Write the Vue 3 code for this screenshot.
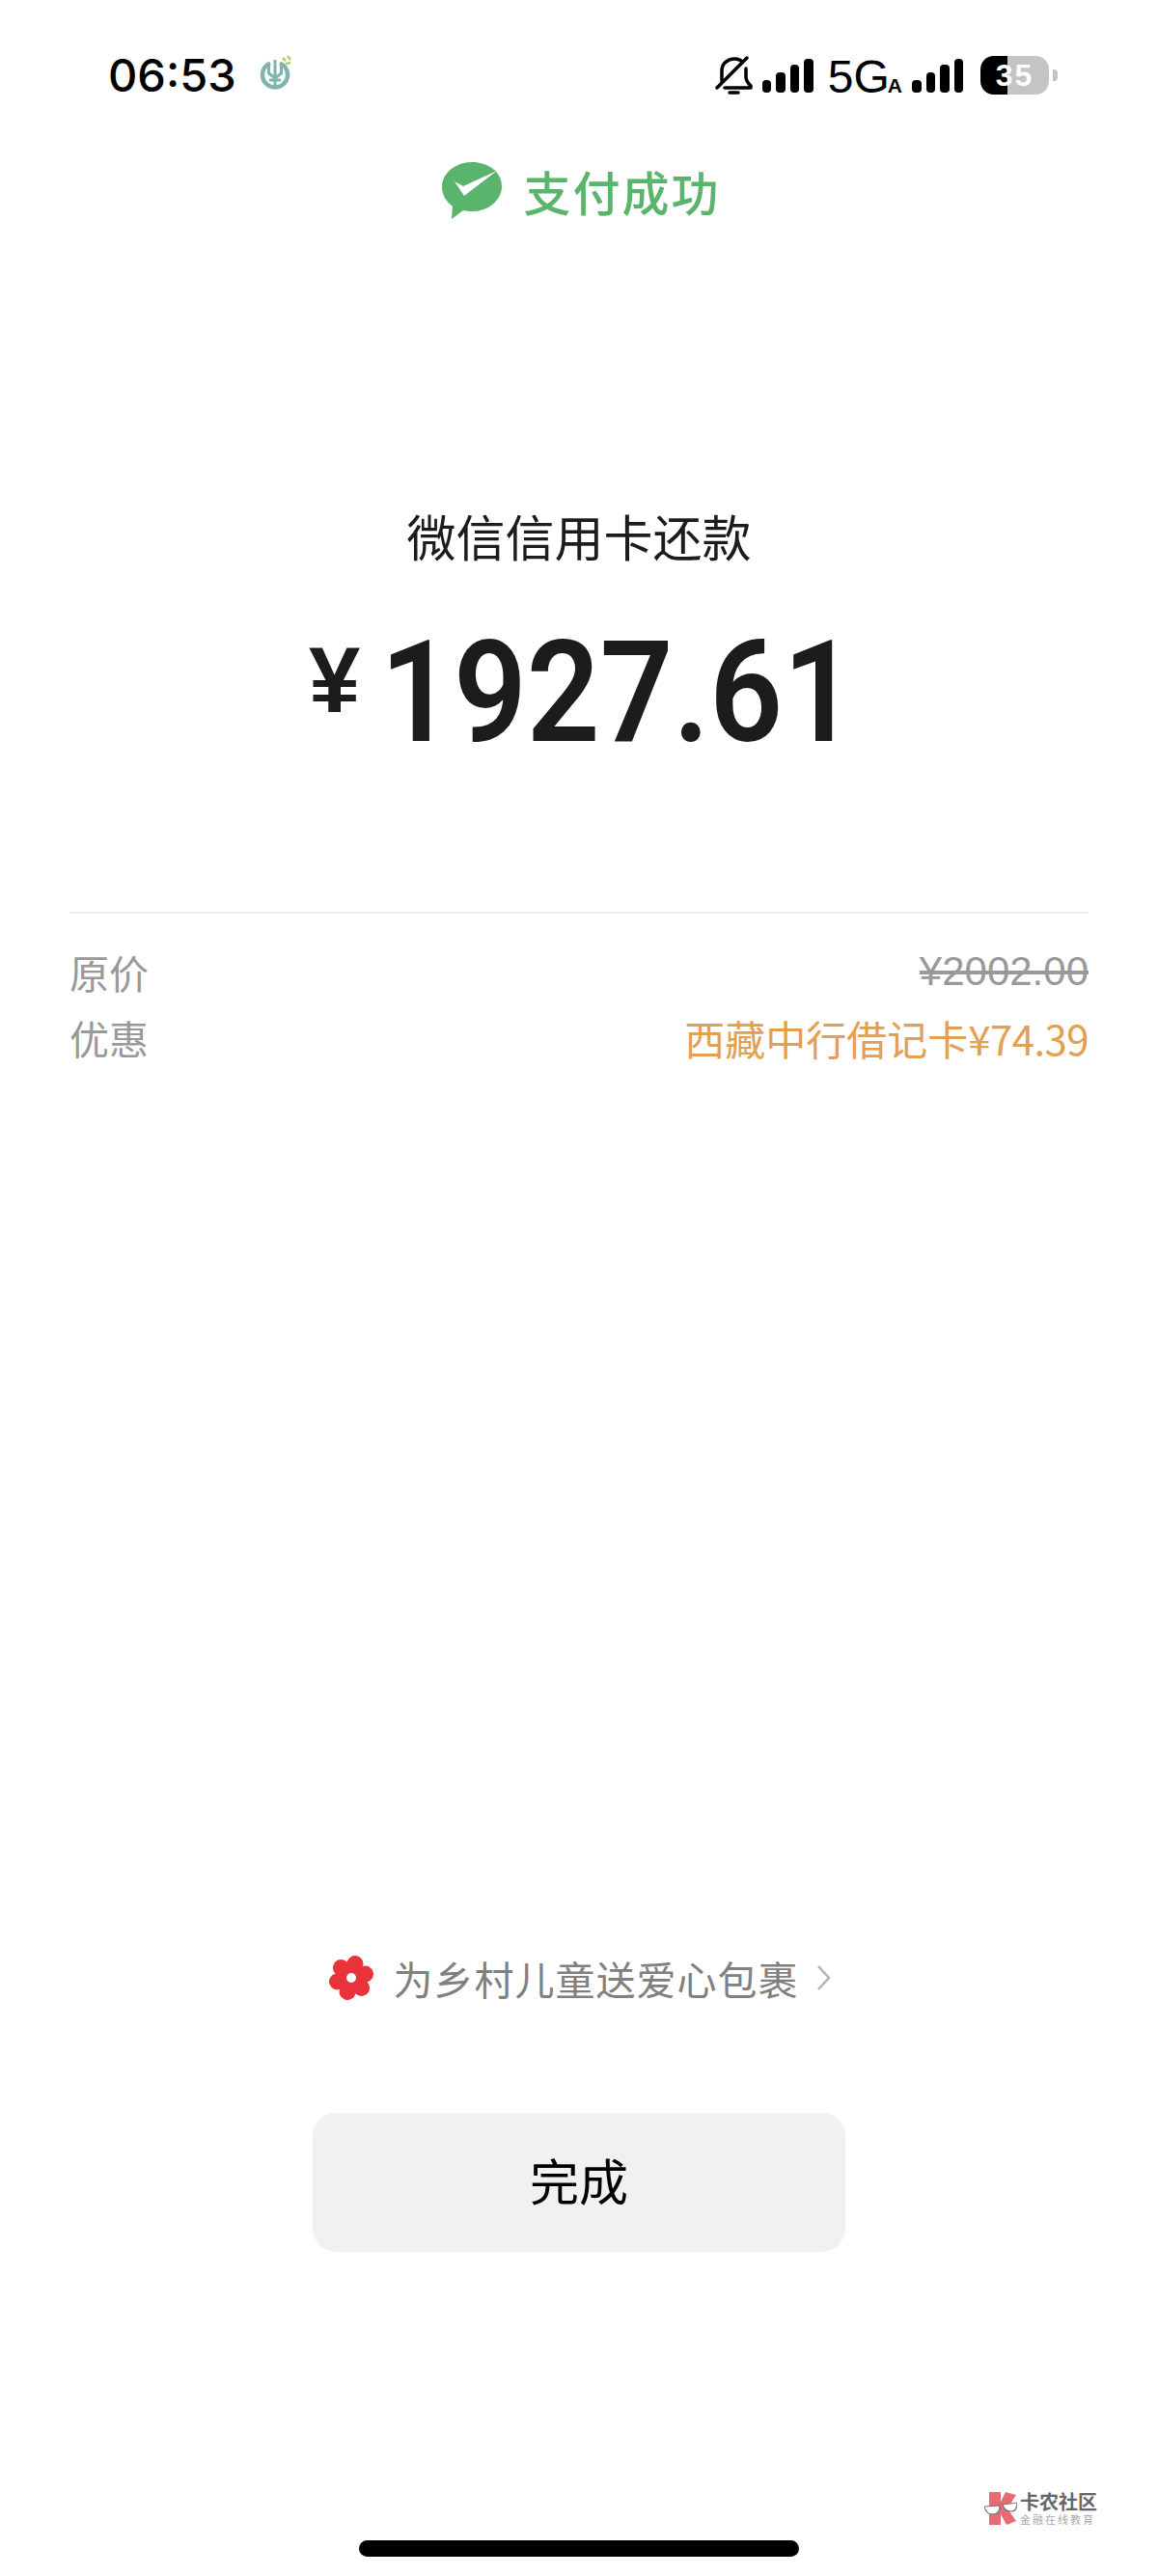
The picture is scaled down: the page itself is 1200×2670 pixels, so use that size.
<template>
  <div class="phone">
    <div class="status-bar">
      <div class="status-left">
        <span class="clock">06:53</span>
        <svg class="bank-icon" width="36" height="36" viewBox="0 0 36 36">
          <path d="M12 8.5a13 13 0 1 0 10 0" fill="none" stroke="#7fb5ae" stroke-width="4.5" />
          <path d="M17 5v28M10.5 9v10l6.5 5 6.500-5V9M11 26h12" fill="none" stroke="#7fb5ae" stroke-width="3" />
          <path d="M25 3l3 3M30 1l3 4M28 9l5-1" stroke="#a9d46e" stroke-width="2.5" />
        </svg>
      </div>
      <div class="status-right">
        <svg class="bell" width="40" height="41" viewBox="0 0 40 41">
          <path d="M7 26V15C7 8 13 3 20 3c3 0 6 1 8 3M32 13v9c0 4 3 7 5 9v2H10M15 38h9" fill="none" stroke="#000" stroke-width="3.5" stroke-linecap="round" stroke-linejoin="round" />
          <path d="M2 33L33 2" stroke="#000" stroke-width="3.5" stroke-linecap="round" />
        </svg>
        <div class="signal">
          <i v-for="h in bars" :key="h" :style="{ height: h + 'px' }"></i>
        </div>
        <span class="net">5G<small>A</small></span>
        <div class="signal">
          <i v-for="h in bars" :key="h" :style="{ height: h + 'px' }"></i>
        </div>
        <div class="battery">
          <div class="battery-body">
            <div class="battery-fill"></div>
            <span class="battery-num">35</span>
          </div>
          <div class="battery-tip"></div>
        </div>
      </div>
    </div>

    <div class="result-title">
      <svg class="wechat-icon" width="62" height="60" viewBox="0 0 62 60">
        <path d="M31 0C14 0 0 11.600 0 26c0 8 4.500 15 11 20l-1 13 12-9c2.800.7 6 1.200 9 1.200 17 0 31-11.600 31-26.200S48 0 31 0z" fill="#5ab46c" />
        <path d="M13 20l9 5L57 9 23 35z" fill="#fff" />
      </svg>
      <span>支付成功</span>
    </div>

    <div class="merchant">微信信用卡还款</div>
    <div class="amount">
      <span class="yen">¥</span>
      <span class="num">1927.61</span>
    </div>

    <div class="details">
      <div class="detail-row">
        <span class="label">原价</span>
        <span class="origin">¥2002.00</span>
      </div>
      <div class="detail-row">
        <span class="label">优惠</span>
        <span class="discount">西藏中行借记卡<span class="discount-num">¥74.39</span></span>
      </div>
    </div>

    <div class="spacer"></div>

    <div class="charity">
      <svg width="48" height="48" viewBox="0 0 48 48">
        <g fill="#e8333a">
          <circle v-for="a in petals" :key="a" cx="24" cy="9" r="8.500" :transform="`rotate(${a} 24 24)`" />
          <circle cx="24" cy="24" r="13" />
        </g>
        <circle cx="24" cy="24" r="5" fill="#fff" />
      </svg>
      <span class="charity-text">为乡村儿童送爱心包裹</span>
      <svg width="15" height="28" viewBox="0 0 15 28">
        <path d="M2 2l11 12L2 26" fill="none" stroke="#b3b3b3" stroke-width="2.500" />
      </svg>
    </div>

    <button class="done">完成</button>

    <div class="watermark">
      <svg width="34" height="34" viewBox="0 0 34 34">
        <path d="M5 0h12v10l5-10 11 3-9 14 9 13-10 4-6-11v11H5z" fill="#e66b75" />
        <path d="M0 15l16-1c0 6-2 9-7 9-5 0-8-3-9-8zM19 13l15-2c0 6-2 9-6 9-5 0-8-3-9-7z" fill="#fff" stroke="#777" stroke-width="1.200" />
      </svg>
      <div class="watermark-text">
        <span class="wm-top">卡农社区</span>
        <span class="wm-sub">金融在线教育</span>
      </div>
    </div>

    <div class="home-bar"></div>
  </div>
</template>

<script setup>
const bars = [13, 21, 29, 35]
const petals = [15, 75, 135, 195, 255, 315]
</script>

<style>
html,
body {
  margin: 0;
  background: #fff;
}
</style>

<style scoped>
.phone {
  position: relative;
  width: 1200px;
  height: 2670px;
  background: #fff;
  display: flex;
  flex-direction: column;
  align-items: center;
  overflow: hidden;
  font-family: "Noto Sans CJK SC", "Liberation Sans", sans-serif;
}

.status-bar {
  width: 100%;
  box-sizing: border-box;
  height: 76px;
  margin-top: 40px;
  padding: 0 104px 0 112px;
  display: flex;
  justify-content: space-between;
  align-items: center;
  flex-shrink: 0;
}

.status-left,
.status-right {
  display: flex;
  align-items: center;
}

.clock {
  font-family: Inter, "Liberation Sans", sans-serif;
  font-size: 47px;
  font-weight: 500;
  color: #000;
  padding-bottom: 2px;
}

.bank-icon {
  margin-left: 23px;
  margin-bottom: 6px;
}

.bell {
  margin-right: 9px;
}

.signal {
  display: flex;
  align-items: flex-end;
  gap: 5px;
}

.signal i {
  display: block;
  width: 9.500px;
  background: #000;
  border-radius: 4px;
}

.net {
  margin: 0 10px 0 15px;
  padding-top: 12px;
  font-family: "Liberation Sans", sans-serif;
  font-size: 48px;
  line-height: 50px;
  color: #000;
}

.net small {
  margin-left: -2px;
  font-size: 21px;
  font-weight: 700;
}

.battery {
  margin-left: 18px;
  display: flex;
  align-items: center;
  gap: 4px;
}

.battery-body {
  position: relative;
  width: 71px;
  height: 40px;
  border-radius: 14px;
  background: #c4c4c4;
  overflow: hidden;
}

.battery-fill {
  width: 28px;
  height: 100%;
  background: #000;
}

.battery-num {
  position: absolute;
  inset: 0;
  text-align: center;
  font-family: "Liberation Sans", sans-serif;
  font-size: 32px;
  font-weight: 700;
  line-height: 40px;
  color: #fff;
  letter-spacing: 2px;
}

.battery-tip {
  width: 5px;
  height: 12px;
  border-radius: 0 4px 4px 0;
  background: #c4c4c4;
}

.result-title {
  margin-top: 49px;
  display: flex;
  align-items: center;
  gap: 22px;
  color: #5ab46c;
  font-size: 49px;
  font-weight: 500;
  line-height: 66px;
  letter-spacing: 2px;
}

.wechat-icon {
  margin-left: 5px;
}

.merchant {
  margin-top: 289px;
  font-size: 51px;
  line-height: 70px;
  color: #1c1c1c;
}

.amount {
  margin-top: 55px;
  width: 560px;
  height: 147px;
  display: flex;
  align-items: flex-start;
  color: #1c1c1c;
  white-space: nowrap;
}

.yen {
  flex-shrink: 0;
  font-family: "Liberation Sans", sans-serif;
  font-size: 96px;
  font-weight: 700;
  line-height: 96px;
  margin-top: 12px;
  margin-right: 21px;
}

.num {
  display: inline-block;
  font-family: Roboto, "Liberation Sans", sans-serif;
  font-size: 146px;
  font-weight: 600;
  line-height: 147px;
  transform: scaleX(0.91);
  transform-origin: left center;
}

.details {
  margin-top: 153px;
  width: 1056px;
  padding-top: 26px;
  border-top: 2px solid #ececec;
}

.detail-row {
  display: flex;
  justify-content: space-between;
  align-items: center;
  height: 68px;
  font-size: 41px;
}

.label {
  color: #999;
}

.origin {
  font-family: "Liberation Sans", sans-serif;
  font-size: 42px;
  color: #999;
  text-decoration: line-through;
}

.discount {
  font-size: 42px;
  color: #e2a052;
}

.discount-num {
  letter-spacing: -0.600px;
}

.spacer {
  flex: 1;
}

.charity {
  display: flex;
  align-items: center;
  color: #808080;
  font-size: 41px;
  line-height: 60px;
}

.charity-text {
  margin: 0 18px 0 20px;
  letter-spacing: 1px;
}

.done {
  margin-top: 110px;
  margin-bottom: 336px;
  padding: 0 0 6px;
  width: 552px;
  height: 144px;
  border: none;
  border-radius: 24px;
  background: #f1f1f1;
  color: #000;
  font-family: inherit;
  font-size: 51px;
  font-weight: 400;
}

.watermark {
  position: absolute;
  left: 1020px;
  top: 2583px;
  display: flex;
  align-items: center;
  gap: 3px;
}

.watermark-text {
  display: flex;
  flex-direction: column;
  line-height: 1;
}

.wm-top {
  font-size: 20px;
  font-weight: 700;
  color: #666;
}

.wm-sub {
  margin-top: 3px;
  font-size: 11px;
  letter-spacing: 2px;
  color: #aaa;
}

.home-bar {
  position: absolute;
  left: 372px;
  top: 2633px;
  width: 456px;
  height: 17px;
  border-radius: 9px;
  background: #000;
}
</style>
